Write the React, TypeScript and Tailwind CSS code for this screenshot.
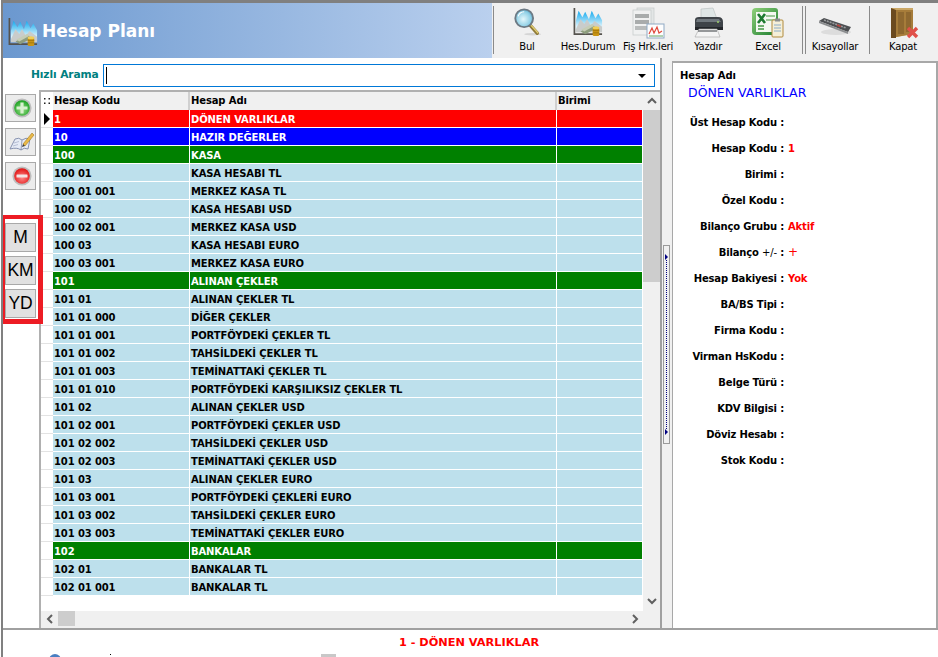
import type { ReactNode } from "react";

/* Hesap Plani screen: toolbar header, account grid on the left, detail panel on the right. */

const ROWS: [string, string, string?][] = [
  ["1", "DÖNEN VARLIKLAR", "red"],
  ["10", "HAZIR DEĞERLER", "blue"],
  ["100", "KASA", "green"],
  ["100 01", "KASA HESABI TL"],
  ["100 01 001", "MERKEZ KASA TL"],
  ["100 02", "KASA HESABI USD"],
  ["100 02 001", "MERKEZ KASA USD"],
  ["100 03", "KASA HESABI EURO"],
  ["100 03 001", "MERKEZ KASA EURO"],
  ["101", "ALINAN ÇEKLER", "green"],
  ["101 01", "ALINAN ÇEKLER TL"],
  ["101 01 000", "DİĞER ÇEKLER"],
  ["101 01 001", "PORTFÖYDEKİ ÇEKLER TL"],
  ["101 01 002", "TAHSİLDEKİ ÇEKLER TL"],
  ["101 01 003", "TEMİNATTAKİ ÇEKLER TL"],
  ["101 01 010", "PORTFÖYDEKİ KARŞILIKSIZ ÇEKLER TL"],
  ["101 02", "ALINAN ÇEKLER USD"],
  ["101 02 001", "PORTFÖYDEKİ ÇEKLER USD"],
  ["101 02 002", "TAHSİLDEKİ ÇEKLER USD"],
  ["101 02 003", "TEMİNATTAKİ ÇEKLER USD"],
  ["101 03", "ALINAN ÇEKLER EURO"],
  ["101 03 001", "PORTFÖYDEKİ ÇEKLERİ EURO"],
  ["101 03 002", "TAHSİLDEKİ ÇEKLER EURO"],
  ["101 03 003", "TEMİNATTAKİ ÇEKLER EURO"],
  ["102", "BANKALAR", "green"],
  ["102 01", "BANKALAR TL"],
  ["102 01 001", "BANKALAR TL"],
];

const FIELDS: [string, string?][] = [
  ["Üst Hesap Kodu"],
  ["Hesap Kodu", "1"],
  ["Birimi"],
  ["Özel Kodu"],
  ["Bilanço Grubu", "Aktif"],
  ["Bilanço +/-", "+"],
  ["Hesap Bakiyesi", "Yok"],
  ["BA/BS Tipi"],
  ["Firma Kodu"],
  ["Virman HsKodu"],
  ["Belge Türü"],
  ["KDV Bilgisi"],
  ["Döviz Hesabı"],
  ["Stok Kodu"],
];

function ChartIcon({ size = 30 }: { size?: number }) {
  return (
    <svg width={size} height={size} viewBox="0 0 32 32">
      <defs>
        <linearGradient id="peak" x1="0" y1="0" x2="0" y2="1">
          <stop offset="0" stopColor="#12a9ee" />
          <stop offset="0.75" stopColor="#d8f2fc" />
        </linearGradient>
      </defs>
      <path d="M3 15 L6 4 L10 11 L13 5 L17 13 L20 4 L24 12 L27 7 L31 14 V26 H3 Z" fill="url(#peak)" />
      <path d="M3 24 L8 13 L12 18 L15 13 L19 20 L23 15 L31 21 V27 H3 Z" fill="#c9cccb" />
      <path d="M1.5 1 V29 H31" fill="none" stroke="#55534e" strokeWidth="1.8" />
      <path d="M8 26 L21 19 L25 23 L13 29 Z" fill="#8d9d7e" />
      <path d="M9 24 L20 18 L23 20 L12 26 Z" fill="#c6cdb6" />
      <rect x="21" y="22" width="7" height="9" rx="1.5" fill="#c89414" />
      <ellipse cx="24.5" cy="22" rx="3.5" ry="1.6" fill="#f0cf58" />
      <path d="M21 25 H28 M21 27.5 H28" stroke="#8f6708" strokeWidth="0.6" />
    </svg>
  );
}

function SearchIcon() {
  return (
    <svg width="30" height="30" viewBox="0 0 32 32">
      <defs>
        <radialGradient id="lens" cx="0.45" cy="0.55" r="0.6">
          <stop offset="0" stopColor="#e4f7fb" />
          <stop offset="0.7" stopColor="#8fd0e6" />
          <stop offset="1" stopColor="#4f9cc0" />
        </radialGradient>
      </defs>
      <ellipse cx="22" cy="29" rx="9" ry="1.4" fill="#d5d5d5" />
      <path d="M18.5 18.5 L27 28" stroke="#8f7a38" strokeWidth="3.6" strokeLinecap="round" />
      <path d="M19 18 L27.5 27.5" stroke="#e3cf72" strokeWidth="1.4" strokeLinecap="round" />
      <circle cx="13" cy="12" r="9.5" fill="url(#lens)" stroke="#6d7a84" strokeWidth="2" />
      <path d="M6.5 10 A7 7 0 0 1 13 5" fill="none" stroke="#fff" strokeWidth="1.2" />
    </svg>
  );
}

function ReportIcon() {
  return (
    <svg width="34" height="32" viewBox="0 0 34 32">
      <rect x="6" y="1" width="17" height="24" fill="#e3e6e6" stroke="#c6caca" strokeWidth="0.7" />
      <rect x="2" y="3" width="18" height="25" fill="#f0f1f1" stroke="#c4c8c8" strokeWidth="0.7" />
      <rect x="4" y="7" width="14" height="4" fill="#a9acac" />
      <rect x="4" y="13" width="14" height="4" fill="#a9acac" />
      <rect x="4" y="19" width="14" height="4" fill="#b9bcbc" />
      <rect x="16" y="17" width="17" height="14" fill="#fdfdfd" stroke="#8fa9c4" strokeWidth="1" />
      <path d="M18 27 L21 21 L23 26 L26 20 L28 26 L31 24" fill="none" stroke="#e14a3c" strokeWidth="1.2" />
      <path d="M18 29 H32" stroke="#64a664" strokeWidth="1" />
    </svg>
  );
}

function PrinterIcon() {
  return (
    <svg width="34" height="32" viewBox="0 0 34 32">
      <path d="M10 2 L22 1 L26 12 H10 Z" fill="#dfe6e6" stroke="#b5bcbc" strokeWidth="0.6" />
      <path d="M4 13 Q4 10 8 10 H27 Q32 10 32 15 V22 H4 Z" fill="#3e4348" />
      <path d="M6 12 H28 L30 15 H5 Z" fill="#6f777d" />
      <rect x="4" y="20" width="28" height="3" fill="#23262a" />
      <path d="M8 22 H26 L29 30 H4 Z" fill="#f4f4f4" stroke="#a5a5a5" strokeWidth="0.6" />
      <path d="M7 24 H26" stroke="#55595c" strokeWidth="1.2" />
      <circle cx="27" cy="15" r="1" fill="#9cd06a" />
    </svg>
  );
}

function ExcelIcon() {
  return (
    <svg width="34" height="32" viewBox="0 0 34 32">
      <defs>
        <linearGradient id="xl" x1="0" y1="0" x2="1" y2="1">
          <stop offset="0" stopColor="#8fd07a" />
          <stop offset="1" stopColor="#1c7d2f" />
        </linearGradient>
      </defs>
      <path d="M1 5 Q1 1 5 1 H24 Q27 1 27 4 V28 H5 Q1 28 1 24 Z" fill="url(#xl)" />
      <rect x="5" y="5" width="20" height="20" fill="#f4f8f2" />
      <rect x="15" y="8" width="9" height="2" fill="#9cc79a" />
      <rect x="15" y="12" width="9" height="2" fill="#9cc79a" />
      <rect x="7" y="18" width="6" height="2" fill="#6fb070" />
      <rect x="7" y="21" width="6" height="2" fill="#6fb070" />
      <path d="M7 7 L14 16 M14 7 L7 16" stroke="#1d7a30" strokeWidth="2.6" />
      <rect x="21" y="13" width="11" height="17" rx="1" fill="#f5efd8" stroke="#b08a3c" strokeWidth="1" />
      <rect x="24" y="11.5" width="5" height="3" fill="#8c8f8f" />
      <path d="M23 18 H30 M23 21 H30 M23 24 H30" stroke="#7fa4c6" strokeWidth="0.9" />
    </svg>
  );
}

function KeyboardIcon() {
  return (
    <svg width="34" height="32" viewBox="0 0 34 32">
      <ellipse cx="18" cy="25" rx="15" ry="3" fill="#dcdcdc" />
      <path d="M1 14 L6 11 L33 20 L30 25 Z" fill="#4d4f52" />
      <path d="M1 14 L30 25 L30 27 L1 16 Z" fill="#8b8d8f" />
      <path d="M6 13 L28 21" stroke="#9a9c9e" strokeWidth="1.6" strokeDasharray="2 1" />
      <path d="M19 18 L23 19.5" stroke="#b8413a" strokeWidth="1.4" />
    </svg>
  );
}

function DoorIcon() {
  return (
    <svg width="34" height="32" viewBox="0 0 34 32">
      <path d="M5 1 H27 V27 L5 31 Z" fill="#caa766" />
      <path d="M5 1 L10 3 V31 L5 31 Z" fill="#6b4a1f" />
      <path d="M10 3 H27 V27 L10 30 Z" fill="#a67c3a" />
      <rect x="12" y="5" width="6" height="22" fill="#8e6830" />
      <rect x="20" y="5" width="5" height="20" fill="#8e6830" />
      <path d="M22 21 L31 30 M31 21 L22 30" stroke="#e0504a" strokeWidth="3.4" />
    </svg>
  );
}

function RoundIcon({ id, from, to, kind }: { id: string; from: string; to: string; kind: "plus" | "minus" }) {
  return (
    <svg width="20" height="20" viewBox="0 0 20 20">
      <defs>
        <radialGradient id={id} cx="0.5" cy="0.6" r="0.6">
          <stop offset="0" stopColor={from} />
          <stop offset="1" stopColor={to} />
        </radialGradient>
      </defs>
      <circle cx="10" cy="10" r="9.6" fill="#bdbdbd" />
      <circle cx="10" cy="10" r="7.8" fill={`url(#${id})`} />
      {kind === "plus" && <path d="M10 4.5 V15.5 M4.5 10 H15.5" stroke="#d8f0d0" strokeWidth="3.2" />}
      {kind === "minus" && <rect x="4.5" y="8.4" width="11" height="3.2" rx="0.6" fill="#f4e4e4" />}
    </svg>
  );
}

function EditIcon() {
  return (
    <svg width="26" height="22" viewBox="0 0 26 22">
      <path d="M1 18 L6 8 Q10 6 13 9 Q17 6 21 8 L19 18 Q15 16 12 19 Q8 16 1 18 Z" fill="#e6ebf6" stroke="#7c88a8" strokeWidth="0.9" />
      <path d="M13 9 L12 19" stroke="#7c88a8" strokeWidth="0.8" />
      <path d="M5 12 L10 10.5 M4 15 L9 13.5" stroke="#aab3cc" strokeWidth="0.8" />
      <path d="M14 13 L23 2 L25 4 L16 15 Z" fill="#e9b949" stroke="#a67c1e" strokeWidth="0.6" />
      <path d="M14 13 L13 16 L16 15 Z" fill="#3b3b3b" />
    </svg>
  );
}

function ToolButton({ w, icon, label }: { w: string; icon: ReactNode; label: string }) {
  return (
    <div className={`flex ${w} shrink-0 flex-col items-center pt-[1px]`}>
      <div className="flex h-[33px] items-start justify-center">{icon}</div>
      <span className="whitespace-nowrap text-[10px] leading-[14px] tracking-[-0.2px] text-black">{label}</span>
    </div>
  );
}

function SideButton({ children }: { children: ReactNode }) {
  return (
    <div className="flex h-[28px] w-[31px] items-center justify-center border border-[#a9a9a9] bg-[#ececec] pl-[2px]">
      {children}
    </div>
  );
}

function LetterButton({ label }: { label: string }) {
  return (
    <div className="flex h-[29px] w-[31px] items-center justify-center border border-[#a9a9a9] bg-[#e1e1e1] font-['Liberation_Sans',sans-serif] text-[17.5px] font-normal tracking-[-0.2px] text-black">
      {label}
    </div>
  );
}

function GridRow({ row }: { row: [string, string, string?] }) {
  const bg =
    row[2] === "red"
      ? "bg-[#ff0000] text-white"
      : row[2] === "blue"
        ? "bg-[#0000ff] text-white"
        : row[2] === "green"
          ? "bg-[#008000] text-white"
          : "bg-[#bde0ec] text-black";
  return (
    <div className="flex h-[18px]">
      <div className="w-[12px] shrink-0 border-b border-[#e3e3e3]" />
      <div className={`flex h-[17px] w-[589px] shrink-0 ${bg}`}>
        <div className="w-[137px] shrink-0 border-r border-white pl-[1px] leading-[19px]">{row[0]}</div>
        <div className="w-[367px] shrink-0 border-r border-white pl-[1px] leading-[19px]">{row[1]}</div>
      </div>
    </div>
  );
}

function Chevron({ dir }: { dir: "up" | "down" | "left" | "right" }) {
  const d = {
    up: "M1 6 L5 2 L9 6",
    down: "M1 2 L5 6 L9 2",
    left: "M6 1 L2 5 L6 9",
    right: "M2 1 L6 5 L2 9",
  }[dir];
  const vertical = dir === "up" || dir === "down";
  return (
    <svg width={vertical ? 10 : 8} height={vertical ? 8 : 10} viewBox={vertical ? "0 0 10 8" : "0 0 8 10"}>
      <path d={d} fill="none" stroke="#606060" strokeWidth="2" />
    </svg>
  );
}

export default function App() {
  return (
    <div className="ml-[1px] flex h-[657px] w-[937px] flex-col overflow-hidden border-l-2 border-[#808080] bg-white font-['DejaVu_Sans',sans-serif] text-[10px] font-bold tracking-[-0.12px]">
      <div className="h-[3px] shrink-0 -ml-[2px] bg-[#808080]" />

      {/* header */}
      <div className="flex h-[55px] shrink-0">
        <div className="flex w-[489px] shrink-0 items-center gap-[4px] bg-gradient-to-r from-[#6b98cf] to-[#bad0ee] pl-[5px] pt-[2px]">
          <ChartIcon />
          <span className="text-[17px] tracking-normal text-white">Hesap Planı</span>
        </div>
        <div className="flex flex-1 items-start bg-[#f0f0f0] pt-[3px] font-normal">
          <div className="ml-[1px] h-[48px] w-[1px] bg-[#8a8a8a]" />
          <div className="ml-[2px] flex">
            <ToolButton w="w-[62px]" icon={<SearchIcon />} label="Bul" />
            <ToolButton w="w-[60px]" icon={<ChartIcon />} label="Hes.Durum" />
            <ToolButton w="w-[60px]" icon={<ReportIcon />} label="Fiş Hrk.leri" />
            <ToolButton w="w-[60px]" icon={<PrinterIcon />} label="Yazdır" />
            <ToolButton w="w-[60px]" icon={<ExcelIcon />} label="Excel" />
          </div>
          <div className="ml-[4px] h-[48px] w-[1px] bg-[#8a8a8a]" />
          <div className="ml-[2px] h-[48px] w-[1px] bg-[#8a8a8a]" />
          <ToolButton w="w-[63px] pr-[5px]" icon={<KeyboardIcon />} label="Kısayollar" />
          <div className="h-[48px] w-[1px] bg-[#8a8a8a]" />
          <ToolButton w="w-[66px]" icon={<DoorIcon />} label="Kapat" />
        </div>
      </div>

      {/* body */}
      <div className="flex h-[572px] shrink-0 border-b-2 border-[#a0a0a0]">
        <div className="flex w-[659px] shrink-0 flex-col border-r-2 border-[#a0a0a0]">
          <div className="flex h-[32px] shrink-0 items-center pt-[3px]">
            <span className="ml-[28px] w-[72px] shrink-0 whitespace-nowrap text-[10.7px] text-[#008080]">Hızlı Arama</span>
            <div className="flex h-[23px] w-[552px] items-center justify-between border border-[#0078d7] pl-[2px] pr-[8px]">
              <div className="h-[17px] w-[1px] bg-black" />
              <div className="h-0 w-0 border-x-[4px] border-t-[4px] border-x-transparent border-t-black" />
            </div>
          </div>

          <div className="flex min-h-0 flex-1">
            {/* side buttons */}
            <div className="w-[36px] shrink-0 pl-[2px] pt-[4px]">
              <div className="flex flex-col gap-[6px]">
                <SideButton>
                  <RoundIcon id="addGrad" from="#9fe08a" to="#18a020" kind="plus" />
                </SideButton>
                <SideButton>
                  <EditIcon />
                </SideButton>
                <SideButton>
                  <RoundIcon id="delGrad" from="#ff8a8a" to="#e01010" kind="minus" />
                </SideButton>
              </div>
              <div className="relative mt-[33px] flex flex-col gap-[4px]">
                <LetterButton label="M" />
                <LetterButton label="KM" />
                <LetterButton label="YD" />
                {/* red highlight drawn over the buttons and the grid edge */}
                <div className="pointer-events-none absolute -left-[5px] -top-[8px] z-10 h-[109px] w-[43px] border-x-[5px] border-b-[5px] border-t-[4px] border-[#ed1c24]" />
              </div>
            </div>

            {/* grid */}
            <div className="flex min-w-0 flex-1 border-l-2 border-t-2 border-[#b0b0b0]">
              <div className="flex w-[602px] shrink-0 flex-col">
                <div className="flex h-[18px] shrink-0 bg-[#f0f0f0] text-black">
                  <div className="flex w-[12px] shrink-0 items-center justify-center bg-white">
                    <svg width="6" height="6" viewBox="0 0 6 6">
                      <path d="M0 0h1.5v1.5H0z M4.5 0H6v1.5H4.5z M0 4.5h1.5V6H0z M4.5 4.5H6V6H4.5z" fill="#202020" />
                    </svg>
                  </div>
                  <div className="w-[137px] shrink-0 border-r-2 border-[#d0d0d0] pl-[1px] leading-[18px]">Hesap Kodu</div>
                  <div className="w-[367px] shrink-0 border-r-2 border-[#d0d0d0] pl-[1px] leading-[18px]">Hesap Adı</div>
                  <div className="flex-1 pl-[1px] leading-[18px]">Birimi</div>
                </div>
                <div className="relative flex-1">
                  {ROWS.map((row) => (
                    <GridRow key={row[0]} row={row} />
                  ))}
                  <div className="absolute left-[3px] top-[3px] h-0 w-0 border-y-[6px] border-l-[6px] border-y-transparent border-l-black" />
                </div>
                <div className="flex h-[17px] shrink-0 items-start justify-between bg-[#f0f0f0] pl-[5px] pr-[4px]">
                  <div className="flex items-start gap-[4px]">
                    <div className="pt-[3px]">
                      <Chevron dir="left" />
                    </div>
                    <div className="h-[15px] w-[17px] bg-[#cdcdcd]" />
                  </div>
                  <div className="pt-[3px]">
                    <Chevron dir="right" />
                  </div>
                </div>
              </div>
              <div className="flex flex-1 flex-col bg-[#f0f0f0]">
                <div className="flex h-[18px] shrink-0 items-center justify-center">
                  <Chevron dir="up" />
                </div>
                <div className="h-[172px] w-full bg-[#cdcdcd]" />
                <div className="mt-auto flex h-[39px] items-center justify-center pb-[15px]">
                  <Chevron dir="down" />
                </div>
              </div>
            </div>
          </div>
        </div>

        {/* splitter */}
        <div className="flex w-[10px] shrink-0 items-center justify-start bg-[#f0f0f0] pl-[1px] pt-[3px]">
          <div className="flex h-[199px] w-[7px] flex-col items-center justify-between border border-[#9a9a9a] py-[8px]">
            <div className="h-0 w-0 border-y-[3px] border-l-[3px] border-y-transparent border-l-[#000080]" />
            <div className="flex-1 border-l border-dotted border-[#000080]" />
            <div className="h-0 w-0 border-y-[3px] border-l-[3px] border-y-transparent border-l-[#000080]" />
          </div>
        </div>

        {/* details */}
        <div className="flex-1 bg-[#f0f0f0] pt-[3px]">
          <div className="h-full border-2 border-b-0 border-l-[1px] border-[#a8a8a8] bg-white text-black">
            <div className="pl-[7px] pt-[5px] leading-[15px]">Hesap Adı</div>
            <div className="pl-[15px] pt-[1px] text-[12.5px] font-normal leading-[18px] tracking-normal text-[#0000ff]">DÖNEN VARLIKLAR</div>
            <div className="pt-[7px] tracking-[-0.18px]">
              {FIELDS.map(([label, value]) => (
                <div key={label} className="flex h-[26px] items-center">
                  <span className="w-[111px] shrink-0 text-right">
                    {label === "Bilanço +/-" ? (
                      <>
                        Bilanço <span className="font-normal">+/-</span>
                      </>
                    ) : (
                      label
                    )}{" "}
                    :
                  </span>
                  <span className={value === "+" ? "pl-[4px] text-[12px] font-normal text-[#ff0000]" : "pl-[4px] text-[#ff0000]"}>{value}</span>
                </div>
              ))}
            </div>
          </div>
        </div>
      </div>

      {/* footer */}
      <div className="flex-1 overflow-hidden">
        <div className="flex h-[24px] items-center justify-center pr-[3px] pt-[2px] text-[11.3px] tracking-normal text-[#ff0000]">1 - DÖNEN VARLIKLAR</div>
        <div className="flex items-start">
          <div className="ml-[46px] h-[12px] w-[12px] rounded-full bg-[#4a7fc1]" />
          <div className="ml-[49px] h-[1px] w-[1px] bg-black" />
          <div className="ml-[210px] h-[12px] w-[15px] bg-[#c8c8c8]" />
        </div>
      </div>
    </div>
  );
}
